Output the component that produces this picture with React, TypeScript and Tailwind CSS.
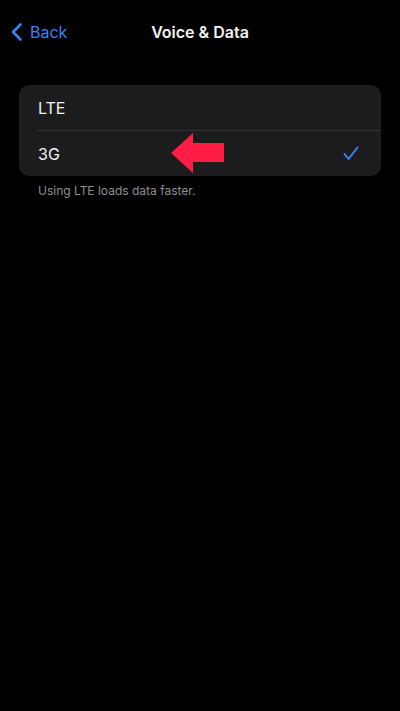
import React from "react";

export default function App() {
  return (
    <div
      className="w-[400px] h-[711px] bg-black text-white overflow-hidden"
      style={{ fontFamily: "Inter, 'Liberation Sans', sans-serif" }}
    >
      <div className="relative h-[64px] flex items-center px-[10px]">
        <div className="flex items-center gap-[6px] text-[#3a82f7]">
          <svg width="14" height="20" viewBox="0 0 14 20" fill="none">
            <path d="M10.5 2.5 L3 10 L10.5 17.5" stroke="#3a82f7" strokeWidth="2.6" strokeLinecap="round" strokeLinejoin="round" />
          </svg>
          <span className="text-[16px] leading-none">Back</span>
        </div>
        <div className="absolute left-0 right-0 text-center text-[16px] font-semibold text-[#f2f2f2] pointer-events-none">
          Voice &amp; Data
        </div>
      </div>

      <div className="px-[19px] pt-[21px]">
        <div className="relative bg-[#1c1c1e] rounded-[10px]">
          <div className="h-[45px] flex items-center pl-[19px] text-[16px] text-[#f2f2f2]">LTE</div>
          <div className="ml-[18px] h-px bg-[#343436]" />
          <div className="h-[45px] flex items-center justify-between pl-[19px] pr-[22px] text-[16px] text-[#f2f2f2]">
            <span>3G</span>
            <svg width="16" height="15" viewBox="0 0 16 15" fill="none">
              <path d="M1.5 8 L5.5 13 L14.5 1.5" stroke="#3a82f7" strokeWidth="2" strokeLinecap="round" strokeLinejoin="round" />
            </svg>
          </div>
          <svg className="absolute left-[152px] top-[48px]" width="54" height="41" viewBox="0 0 54 41">
            <polygon points="0,20 22,0 22,10 53,10 53,29 22,29 22,40" fill="#ff1c45" />
          </svg>
        </div>
        <div className="pl-[19px] pt-[6px] text-[12px] text-[#8e8e93]">Using LTE loads data faster.</div>
      </div>
    </div>
  );
}
